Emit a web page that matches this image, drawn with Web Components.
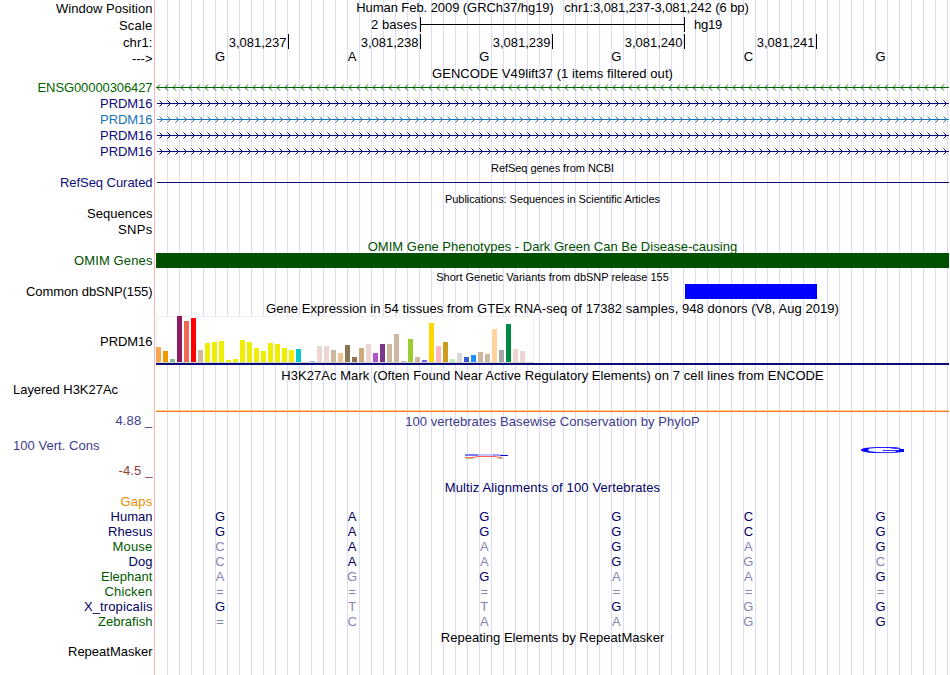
<!DOCTYPE html>
<html lang="en">
<head>
<meta charset="utf-8">
<title>chr1:3,081,237-3,081,242</title>
<style>
    html, body {
        margin: 0;
        background: #fff;
    }
    body {
        width: 950px;
        height: 675px;
        overflow: hidden;
        font: 13px/15px "Liberation Sans", Arial, sans-serif;
        color: #000;
    }
</style>
</head>
<body>
<genome-browser></genome-browser>

<script>
/**
 * Text with a fixed advance width, spread through letter-spacing
 */
class FitText extends HTMLElement {
    constructor() {
        super();
        this.attachShadow({ mode: 'open' });
        this.shadowRoot.innerHTML = `
            <style>
                :host { display: inline-block; vertical-align: top; }
                span { display: inline-block; vertical-align: top; white-space: pre; }
            </style>
            <span><slot></slot></span>
        `;
    }

    connectedCallback() {
        const target = parseFloat(this.getAttribute('width'));
        if (!target) return;
        const span = this.shadowRoot.querySelector('span');
        const natural = span.getBoundingClientRect().width;
        const gap = (target - natural) / this.textContent.length;
        span.style.letterSpacing = gap.toFixed(3) + 'px';
    }
}

/**
 * One row: label on the left, plot on the right
 */
class TrackRow extends HTMLElement {
    constructor() {
        super();
        this.attachShadow({ mode: 'open' });
    }

    connectedCallback() {
        const attr = (name, fallback) => this.getAttribute(name) || fallback;
        this.shadowRoot.innerHTML = `
            <style>
                :host {
                    display: grid;
                    grid-template-columns: 156px 793px;
                    height: ${attr('h', 16)}px;
                }
                .label {
                    box-sizing: border-box;
                    height: 15px;
                    margin-top: ${attr('ly', 0)}px;
                    padding: 0 3.5px 0 13px;
                    text-align: ${attr('align', 'right')};
                    color: ${attr('color', '#000')};
                    white-space: nowrap;
                }
                .plot { min-width: 0; height: 100%; }
            </style>
            <div class="label"><slot name="label"></slot></div>
            <div class="plot"><slot></slot></div>
        `;
    }
}

/**
 * Centered caption above a track
 */
class TrackTitle extends HTMLElement {
    constructor() {
        super();
        this.attachShadow({ mode: 'open' });
    }

    connectedCallback() {
        this.shadowRoot.innerHTML = `
            <style>
                :host {
                    display: block;
                    height: 15px;
                    padding-top: ${this.getAttribute('dy') || 0}px;
                    text-align: center;
                    color: ${this.getAttribute('color') || '#000'};
                    font-size: ${this.getAttribute('size') || 13}px;
                }
            </style>
            <slot></slot>
        `;
    }
}

/**
 * Six letters, one per base
 */
class BaseRow extends HTMLElement {
    constructor() {
        super();
        this.attachShadow({ mode: 'open' });
    }

    connectedCallback() {
        // lower case marks a base that differs from the reference genome
        const bases = [...this.getAttribute('bases')];
        this.shadowRoot.innerHTML = `
            <style>
                :host {
                    display: grid;
                    grid-template-columns: repeat(6, 132.1px);
                    height: 15px;
                    padding-top: ${this.getAttribute('dy') || 0}px;
                    margin-left: -2px;
                    color: ${this.getAttribute('color') || '#000064'};
                }
                span { text-align: center; }
                .diff { color: #8484b4; }
            </style>
            ${bases.map(b => `<span class="${/[a-z=]/.test(b) ? 'diff' : ''}">${b.toUpperCase()}</span>`).join('')}
        `;
    }
}

/**
 * Scale bar
 */
class ScaleBar extends HTMLElement {
    constructor() {
        super();
        this.attachShadow({ mode: 'open' });
        this.shadowRoot.innerHTML = `
            <style>
                :host { display: grid; grid-template-columns: 264px 265px 1fr; height: 17px; }
                .left { text-align: right; padding-right: 3px; }
                .bar {
                    box-sizing: border-box;
                    height: 15px;
                    border: solid #000;
                    border-width: 0 1px;
                    background: linear-gradient(#000, #000) 0 7px / 100% 1px no-repeat;
                }
                .right { padding-left: 9px; }
            </style>
            <div class="left"><fit-text width="46">2 bases</fit-text></div>
            <div class="bar"></div>
            <div class="right"><fit-text width="28">hg19</fit-text></div>
        `;
    }
}

/**
 * Coordinates with a tick after each
 */
class PositionRuler extends HTMLElement {
    constructor() {
        super();
        this.attachShadow({ mode: 'open' });
        const ticks = ['3,081,237', '3,081,238', '3,081,239', '3,081,240', '3,081,241'];
        this.shadowRoot.innerHTML = `
            <style>
                :host { display: grid; grid-template-columns: 133px repeat(4, 132px); height: 15px; }
                span {
                    text-align: right;
                    padding: 1px 1.5px 0 0;
                    height: 14px;
                    border-right: 1px solid #000;
                }
            </style>
            ${ticks.map(t => `<span><fit-text width="57.8">${t}</fit-text></span>`).join('')}
        `;
    }
}

/**
 * Intron line with strand chevrons
 */
class GeneLine extends HTMLElement {
    constructor() {
        super();
        this.attachShadow({ mode: 'open' });
    }

    connectedCallback() {
        const color = this.getAttribute('color');
        const back = this.getAttribute('strand') === '-';
        const start = back ? 0 : 1;
        let arms = '';
        for (let x = back ? 1 : 6.5; x < 793; x += 8) {
            const end = back ? x + 3 : x - 3;
            arms += `M${end} 4.5L${x} 7.5L${end} 10.5`;
        }
        this.shadowRoot.innerHTML = `
            <style>
                :host, svg { display: block; height: 16px; }
            </style>
            <svg width="793" height="16" fill="none" stroke="${color}">
                <path d="M${start} 7.5H793"/>
                <path d="${arms}"/>
            </svg>
        `;
    }
}

/**
 * Filled item
 */
class TrackBlock extends HTMLElement {
    constructor() {
        super();
        this.attachShadow({ mode: 'open' });
    }

    connectedCallback() {
        this.shadowRoot.innerHTML = `
            <style>
                :host {
                    display: block;
                    height: ${this.getAttribute('h')}px;
                    width: ${this.getAttribute('w')}px;
                    margin-left: ${this.getAttribute('x') || 0}px;
                    background: ${this.getAttribute('color')};
                }
            </style>
        `;
    }
}

/**
 * GTEx expression bars, one per tissue
 */
const TISSUES = [
    [15, '#ffa54f'], [11, '#ee9a00'], [3, '#8fbc8f'], [46, '#8b1c62'], [41, '#ee6a50'], [44, '#ff0000'],
    [12, '#cdb79e'], [19, '#eeee00'], [20, '#eeee00'], [21, '#eeee00'], [2, '#eeee00'], [3, '#eeee00'],
    [22, '#eeee00'], [20, '#eeee00'], [14, '#eeee00'], [11, '#eeee00'], [19, '#eeee00'], [18, '#eeee00'],
    [14, '#eeee00'], [12, '#eeee00'], [13, '#00cdcd'], [0, '#ee82ee'], [1, '#9ac0cd'], [16, '#eed5d2'],
    [16, '#eed5d2'], [12, '#cdb79e'], [9, '#eec591'], [17, '#8b7355'], [5, '#8b7355'], [14, '#cdaa7d'],
    [18, '#eed5d2'], [9, '#b452cd'], [18, '#7a378b'], [18, '#cdb79e'], [28, '#cdb79e'], [1, '#cdb79e'],
    [23, '#9acd32'], [5, '#cdb79e'], [2, '#7a67ee'], [39, '#ffd700'], [16, '#ffb6c1'], [20, '#cd9b1d'],
    [3, '#b4eeb4'], [9, '#d9d9d9'], [5, '#3a5fcd'], [7, '#1e90ff'], [10, '#cdb79e'], [8, '#cdb79e'],
    [33, '#ffd39b'], [12, '#a6a6a6'], [38, '#008b45'], [13, '#eed5d2'], [11, '#eed5d2'], [0, '#ff00ff']
];

class ExpressionBars extends HTMLElement {
    constructor() {
        super();
        this.attachShadow({ mode: 'open' });
        this.shadowRoot.innerHTML = `
            <style>
                :host { display: block; border-bottom: 2px solid #0c0c78; }
                .graph {
                    display: flex;
                    align-items: flex-end;
                    gap: 2px;
                    box-sizing: border-box;
                    width: 378px;
                    height: 47px;
                    border-bottom: 1px solid #d2d2d2;
                    background: #fff;
                    box-shadow: inset 1px 1px #f0f0f0, inset -1px 0 #f0f0f0;
                }
                i { flex: 0 0 5px; }
            </style>
            <div class="graph">
                ${TISSUES.map(([h, c]) => `<i style="height:${h}px;background:${c}"></i>`).join('')}
            </div>
        `;
    }
}

/**
 * PhyloP logo: letters squashed to the score
 */
class ConservationLogo extends HTMLElement {
    constructor() {
        super();
        this.attachShadow({ mode: 'open' });
        this.shadowRoot.innerHTML = `
            <style>
                :host, svg { display: block; }
                text { font: 20px "Liberation Sans", Arial, sans-serif; }
            </style>
            <svg width="793" height="51" fill="none">
                <path d="M309 26H322" stroke="#5a5aff" stroke-width="1.6"/>
                <path d="M322 26H338" stroke="#b4b4ff" stroke-width="1.6"/>
                <path d="M337 25.8L347 26.3" stroke="#6e6eff" stroke-width="1.2"/>
                <path d="M345 26.5H352" stroke="#0000dc"/>
                <path d="M309 28.6H315L323 27.5H338L346 28.6" stroke="#ff4646" stroke-width=".9"/>
                <path d="M310 29.4H317M342 29.4H347" stroke="#b4b43c" stroke-width=".8"/>
                <path d="M317 29.5H342" stroke="#f0f0d2" stroke-width=".6"/>
                <text transform="translate(702.6 23.9) scale(3.05 .47)" fill="#0000ff" stroke="#0000ff" stroke-width=".45">G</text>
                <rect x="743" y="20" width="5" height="3" fill="#0000ff"/>
            </svg>
        `;
    }
}

/**
 * The whole picture
 */
const NAVY = '#0c0c78';
const LABEL_NAVY = '#000064';
const LABEL_GREEN = '#005a00';

const label = (text, width) => `<fit-text slot="label" width="${width}">${text}</fit-text>`;

const title = (h, text, width, opts = '') => `
    <track-row h="${h}"><track-title ${opts}><fit-text width="${width}">${text}</fit-text></track-title></track-row>`;

const gene = (name, width, color, strand) => `
    <track-row h="16" color="${color}">${label(name, width)}<gene-line color="${color}" strand="${strand}"></gene-line></track-row>`;

const species = (name, width, color, bases) => `
    <track-row h="15" color="${color}">${label(name, width)}<base-row bases="${bases}"></base-row></track-row>`;

class GenomeBrowser extends HTMLElement {
    constructor() {
        super();
        this.attachShadow({ mode: 'open' });
    }

    connectedCallback() {
        this.shadowRoot.innerHTML = `
            <style>
                :host {
                    display: flex;
                    flex-direction: column;
                    width: 950px;
                    height: 675px;
                    background:
                        linear-gradient(#ffb4b4, #ffb4b4) 154px 0 / 1px 100% no-repeat,
                        repeating-linear-gradient(90deg, #dcdcf8 0 1px, transparent 1px 12px) 167px 0 / 782px 100% no-repeat;
                }
                track-row { flex: none; }
            </style>
            <track-row h="16" ly="1">${label('Window Position', 96.5)}
                <track-title><fit-text width="392.5">Human Feb. 2009 (GRCh37/hg19)   chr1:3,081,237-3,081,242 (6 bp)</fit-text></track-title>
            </track-row>
            <track-row h="18" ly="2">${label('Scale', 33.5)}<scale-bar style="margin-top:1px"></scale-bar></track-row>
            <track-row h="15" ly="1">${label('chr1:', 29.5)}<position-ruler></position-ruler></track-row>
            <track-row h="17" ly="2">${label('---&gt;', 20.5)}<base-row bases="GAGGCG" color="#000"></base-row></track-row>
            ${title(14, 'GENCODE V49lift37 (1 items filtered out)', 241)}
            ${gene('ENSG00000306427', 115, '#006400', '-')}
            ${gene('PRDM16', 52.5, NAVY, '+')}
            ${gene('PRDM16', 52.5, '#1874b4', '+')}
            ${gene('PRDM16', 52.5, NAVY, '+')}
            ${gene('PRDM16', 52.5, NAVY, '+')}
            ${title(15, 'RefSeq genes from NCBI', 123, 'size="11" dy="1"')}
            <track-row h="16" color="${NAVY}">${label('RefSeq Curated', 92.5)}
                <track-block x="1" w="792" h="1" color="${NAVY}" style="position:relative;top:7px"></track-block>
            </track-row>
            ${title(15, 'Publications: Sequences in Scientific Articles', 215, 'size="11" dy="1"')}
            <track-row h="16">${label('Sequences', 65.5)}</track-row>
            <track-row h="17">${label('SNPs', 34.5)}</track-row>
            ${title(14, 'OMIM Gene Phenotypes - Dark Green Can Be Disease-causing', 369.5, 'color="#005000"')}
            <track-row h="16" color="#005000">${label('OMIM Genes', 78.5)}
                <track-block w="793" h="15" color="#005000"></track-block>
            </track-row>
            ${title(15, 'Short Genetic Variants from dbSNP release 155', 232.5, 'size="11" dy="1"')}
            <track-row h="16">${label('Common dbSNP(155)', 126.5)}
                <track-block x="529" w="132" h="15" color="#0000ff"></track-block>
            </track-row>
            ${title(16, 'Gene Expression in 54 tissues from GTEx RNA-seq of 17382 samples, 948 donors (V8, Aug 2019)', 573, 'dy="1"')}
            <track-row h="52" ly="18">${label('PRDM16', 52.5)}<expression-bars></expression-bars></track-row>
            ${title(14, 'H3K27Ac Mark (Often Found Near Active Regulatory Elements) on 7 cell lines from ENCODE', 542.5)}
            <track-row h="32" align="left">${label('Layered H3K27Ac', 105)}
                <div style="height:28px"></div>
                <track-block w="793" h="2" color="linear-gradient(#ffd278 50%, #f07832 50%)"></track-block>
            </track-row>
            <track-row h="15" ly="-1" color="#3c3c8c">${label('4.88 _', 37)}
                <track-title color="#3c3c8c"><fit-text width="294.5">100 vertebrates Basewise Conservation by PhyloP</fit-text></track-title>
            </track-row>
            <track-row h="51" ly="9" align="left" color="#3c3c8c">
                <div slot="label"><fit-text width="86.5">100 Vert. Cons</fit-text></div>
                <div slot="label" style="margin-top:10px;text-align:right;color:#8c3c3c"><fit-text width="34">-4.5 _</fit-text></div>
                <conservation-logo></conservation-logo>
            </track-row>
            ${title(14, 'Multiz Alignments of 100 Vertebrates', 215.5, 'color="#000064"')}
            <track-row h="15" color="#eb8c00">${label('Gaps', 32)}</track-row>
            ${species('Human', 42, LABEL_NAVY, 'GAGGCG')}
            ${species('Rhesus', 44.5, LABEL_NAVY, 'GAGGCG')}
            ${species('Mouse', 40, LABEL_GREEN, 'cAaGaG')}
            ${species('Dog', 24, LABEL_NAVY, 'cAaGgc')}
            ${species('Elephant', 51.5, LABEL_GREEN, 'agGaaG')}
            ${species('Chicken', 48, LABEL_GREEN, '======')}
            ${species('X_tropicalis', 68.5, LABEL_NAVY, 'GttGgG')}
            ${species('Zebrafish', 54.5, LABEL_GREEN, '=caagG')}
            ${title(15, 'Repeating Elements by RepeatMasker', 223.5, 'dy="1"')}
            <track-row h="16">${label('RepeatMasker', 84.5)}</track-row>
        `;
    }
}

customElements.define('fit-text', FitText);
customElements.define('track-row', TrackRow);
customElements.define('track-title', TrackTitle);
customElements.define('base-row', BaseRow);
customElements.define('scale-bar', ScaleBar);
customElements.define('position-ruler', PositionRuler);
customElements.define('gene-line', GeneLine);
customElements.define('track-block', TrackBlock);
customElements.define('expression-bars', ExpressionBars);
customElements.define('conservation-logo', ConservationLogo);
customElements.define('genome-browser', GenomeBrowser);
</script>
</body>
</html>
